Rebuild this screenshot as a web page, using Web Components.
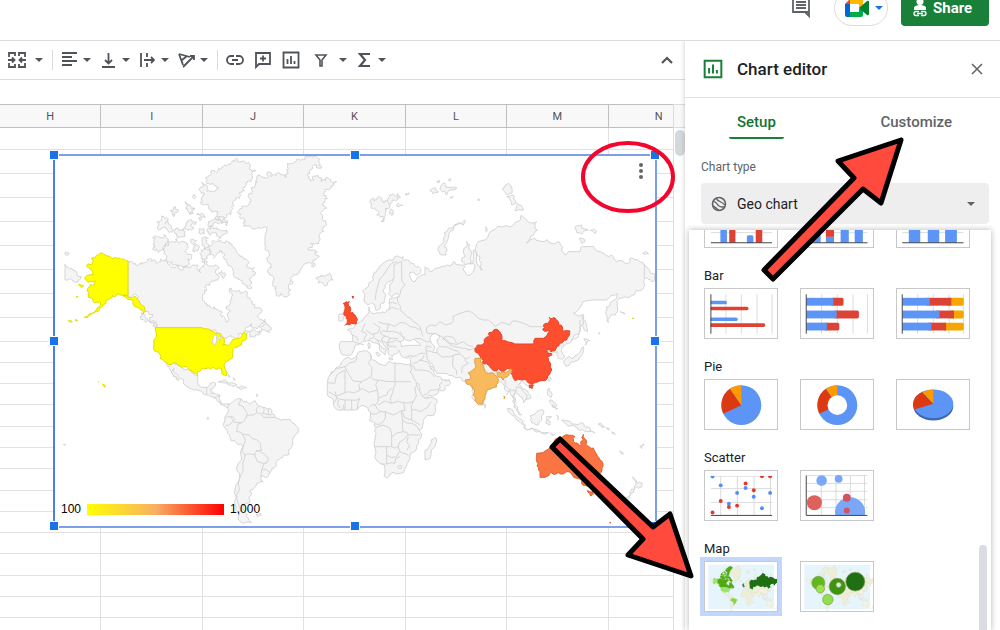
<!DOCTYPE html>
<html lang="en">
<head>
<meta charset="utf-8">
<title>Spreadsheet - Chart editor</title>
<style>
  html, body { height: 100%; }
  body {
    margin: 0;
    overflow: hidden;
    background: #fff;
    color: #202124;
    font-family: Roboto, "Liberation Sans", sans-serif;
  }
</style>
</head>
<body>
<sheets-app>
  <app-header slot="header"></app-header>
  <tool-bar slot="main"></tool-bar>
  <sheet-grid slot="main"><geo-chart min="100" max="1,000"></geo-chart></sheet-grid>
  <chart-editor slot="side" heading="Chart editor"></chart-editor>
</sheets-app>

<script>
(function () {
  'use strict';

  function define(name, render) {
    customElements.define(name, class extends HTMLElement {
      constructor() {
        super();
        this.attachShadow({ mode: 'open' });
      }
      connectedCallback() {
        this.shadowRoot.innerHTML = render(this);
      }
    });
  }

  /* ---------- icons ---------- */

  const ICONS = {
    merge: '<path d="M1 6V2h6v3M17 6V2h-6v3M1 12v4h6v-3M17 12v4h-6v-3M0 9h6M18 9h-6M4 6.500L6.500 9 4 11.500M14 6.500L11.500 9l2.500 2.500"/>',
    align: '<path d="M1 2h15M1 6h10M1 10h15M1 14h10"/>',
    bottom: '<path d="M2 16h13M8.500 2v10M5 9l3.500 3.500L12 9"/>',
    overflow: '<path d="M2 2v14M8 2v4M8 12v4M5 9h10M12 6l3 3-3 3"/>',
    rotate: '<path d="M1 3l11 3M1 3l4 11M4 9l5-4M5 16L16 5M12 5h4v4"/>',
    link: '<path d="M8 5H5a4 4 0 0 0 0 8h3M10 5h3a4 4 0 0 1 0 8h-3M6 9h6"/>',
    comment: '<path d="M2 2h14v11H5l-3 3zM9 4.500v6M6 7.500h6"/>',
    chart: '<path d="M1.500 1.500h15v15h-15zM5.500 8v5M9 5v8M12.500 10v3"/>',
    filter: '<path d="M4 4h10l-4 5v6H8V9z" stroke-width="1.600"/>',
    sigma: '<path d="M14 3H4l5 6-5 6h10" stroke-width="2.200"/>',
    up: '<path d="M4 12l5-5 5 5" stroke-width="2.200"/>',
    close: '<path d="M4 4l10 10M14 4L4 14" stroke-width="1.500"/>',
    geo: '<circle cx="9" cy="9" r="7.300"/><path d="M2.500 6c4 0 4 4 7 5.500s4 1 6 .5M6 2.500c1 4 6 3 9.500 7.500M2 11c3 1 4 3 7 5" stroke-width="1.500"/>',
    notes: '<path d="M1 0h16v13H1zM13 13l4 4v-4M4 3h10M4 6h10M4 9h10"/>',
    people: '<g fill="currentColor" stroke="none"><circle cx="9" cy="2.500" r="3.500"/><path d="M3 11V9c0-2 3-3 6-3s6 1 6 3v2z"/></g><path d="M8 12.500H5a2 2 0 0 0 0 4h3M10 12.500h3a2 2 0 0 1 0 4h-3M6 14.500h6" stroke-width="1.300"/>',
    meet: '<g stroke="none"><path fill="#ea4335" d="M0 5l5-5v5z"/><path fill="#ffba00" d="M5 0h11a2 2 0 0 1 2 2v7l-4 2V5H5z"/><path fill="#0066da" d="M0 5h5v13H2a2 2 0 0 1-2-2z"/><path fill="#00ac47" d="M5 13h9v-3l4-1v7a2 2 0 0 1-2 2H5z"/><path fill="#00832d" d="M14 9l8-7c1-.600 2 0 2 1v12c0 1-1 1.500-2 1z"/></g>'
  };

  define('ui-icon', el => {
    const name = el.getAttribute('name');
    const box = name === 'meet' ? '0 0 24 18' : '0 0 18 18';
    return `
      <style>
        :host { display: inline-block; width: 18px; height: 18px; flex: none; }
        :host([name="meet"]) { width: 24px; }
        svg { display: block; width: 100%; height: 100%; overflow: visible; }
      </style>
      <svg viewBox="${box}" fill="none" stroke="currentColor" stroke-width="1.800" aria-hidden="true">${ICONS[name]}</svg>`;
  });

  define('ui-caret', () => `
    <style>
      :host { display: inline-block; width: 8px; height: 4px; flex: none; }
      svg { display: block; width: 100%; height: 100%; }
    </style>
    <svg viewBox="0 0 8 4" fill="currentColor" aria-hidden="true"><path d="M0 0h8L4 4z"/></svg>`);

  /* ---------- application frame ---------- */

  define('sheets-app', () => `
    <style>
      :host { display: flex; flex-direction: column; height: 100vh; position: relative; overflow: hidden; }
      .body { display: flex; flex: 1; min-height: 0; }
      main { display: flex; flex-direction: column; flex: 1; min-width: 0; }
      aside {
        display: flex;
        flex: none;
        width: 315px;
        position: relative;
        background: #fff;
        box-shadow: -1px 0 4px rgba(60, 64, 67, .2);
        clip-path: inset(0 0 0 -8px);
      }
      ::slotted(sheet-grid) { flex: 1; min-height: 0; }
      ::slotted(chart-editor) { flex: 1; }
    </style>
    <slot name="header"></slot>
    <div class="body">
      <main><slot name="main"></slot></main>
      <aside><slot name="side"></slot></aside>
    </div>
    <callout-marks></callout-marks>`);

  define('app-header', () => `
    <style>
      :host {
        display: flex;
        align-items: center;
        justify-content: flex-end;
        gap: 13px;
        flex: none;
        box-sizing: border-box;
        height: 65px;
        margin-top: -24px;
        padding-right: 11px;
        border-bottom: 1px solid #dadce0;
        color: #5f6368;
      }
      button { display: flex; align-items: center; border: 0; background: none; padding: 0; color: inherit; font: inherit; }
      .notes { margin-right: 10px; }
      .notes ui-icon { width: 20px; height: 18px; }
      .meet { box-sizing: border-box; width: 54px; height: 36px; padding: 0 6px 0 10px; gap: 6px; border: 1px solid #dadce0; border-radius: 18px; color: #1a73e8; }
      .share { height: 36px; width: 88px; padding-left: 10px; gap: 4px; border-radius: 4px; background: #188038; color: #fff; font-size: 15px; font-weight: 700; }
    </style>
    <button class="notes" aria-label="Comments"><ui-icon name="notes"></ui-icon></button>
    <button class="meet" aria-label="Join a call"><ui-icon name="meet"></ui-icon><ui-caret></ui-caret></button>
    <button class="share"><ui-icon name="people"></ui-icon>Share</button>`);

  define('tool-bar', () => {
    const tool = (icon, label, cls) => `
      <button class="${cls}" aria-label="${label}"><ui-icon name="${icon}"></ui-icon>${/menu/.test(cls) ? '<ui-caret></ui-caret>' : ''}</button>`;
    return `
      <style>
        :host {
          display: flex;
          align-items: center;
          gap: 9px;
          flex: none;
          height: 38px;
          padding: 0 9px 0 8px;
          border-bottom: 1px solid #dadce0;
          color: #50545a;
        }
        button { display: flex; align-items: center; gap: 4px; margin: 0; border: 0; background: none; padding: 0; color: inherit; }
        .wide { gap: 9px; }
        .single { padding-right: 1px; }
        .filter { padding-left: 2px; }
        .end { margin-left: auto; }
        i { width: 1px; height: 20px; margin-right: -1px; background: #dadce0; }
      </style>
      ${tool('merge', 'Merge cells', 'menu wide')}
      <i></i>
      ${tool('align', 'Horizontal align', 'menu')}
      ${tool('bottom', 'Vertical align', 'menu')}
      ${tool('overflow', 'Text wrapping', 'menu')}
      ${tool('rotate', 'Text rotation', 'menu')}
      <i></i>
      ${tool('link', 'Insert link', 'single')}
      ${tool('comment', 'Insert comment', 'single')}
      ${tool('chart', 'Insert chart', 'single')}
      ${tool('filter', 'Filter', 'menu wide filter')}
      ${tool('sigma', 'Functions', 'menu')}
      ${tool('up', 'Hide the menus', 'end')}`;
  });

  /* ---------- grid ---------- */

  const COLUMNS = ['H', 'I', 'J', 'K', 'L', 'M', 'N'];
  const ROWS = [22, 24, 24, 24, 24, 24, 24, 24, 24, 21, 21, 21, 22, 21, 21, 22, 21, 21, 21, 22, 21, 21, 21];

  define('sheet-grid', () => `
    <style>
      :host { display: flex; flex-direction: column; position: relative; overflow: hidden; }
      .formula { flex: none; height: 24px; }
      .area { display: flex; flex: 1; min-height: 0; }
      .cells { flex: 1; min-width: 0; overflow: hidden; border-right: 1px solid #dadce0; }
      table { border-collapse: separate; border-spacing: 0; table-layout: fixed; width: 710px; }
      th {
        box-sizing: border-box;
        height: 24px;
        padding: 0;
        background: #f8f8f8;
        border: solid #c0c0c0;
        border-width: 1px 1px 1px 0;
        color: #50545a;
        font-size: 11px;
        font-weight: 400;
      }
      td { box-sizing: border-box; padding: 0; border: solid #e1e1e1; border-width: 0 1px 1px 0; }
      .scroll { flex: none; width: 11px; }
      .corner { height: 22px; background: #f8f8f8; border: solid #dadce0; border-width: 1px 0; }
      .thumb { height: 26px; margin: 2px 0 0 1px; border-radius: 5px; background: #d5d8db; }
    </style>
    <div class="formula"></div>
    <div class="area">
      <div class="cells">
        <table>
          <thead><tr>${COLUMNS.map(c => `<th scope="col">${c}</th>`).join('')}</tr></thead>
          <tbody>${ROWS.map(h => `<tr style="height:${h}px">${COLUMNS.map(() => '<td></td>').join('')}</tr>`).join('')}</tbody>
        </table>
      </div>
      <div class="scroll"><div class="corner"></div><div class="thumb"></div></div>
    </div>
    <slot></slot>`);

  /* ---------- world map ---------- */

  // Outlines are flat lists "x y x y ...", one shape per "|", each set with its own origin.
  const LAND = [
    { id: 'ca', rough: 3, at: [150, 450], d: '234 333 262 346 275 336 292 328 300 325 315 330 325 337 345 328 352 340 370 352 395 360 415 355 430 345 440 355 452 368 460 352 455 335 462 328 472 335 480 350 495 345 508 352 500 372 502 392 480 405 462 422 457 440 465 460 480 472 500 478 517 486 515 500 527 515 535 512 532 495 542 482 540 455 545 440 537 425 545 415 560 425 575 430 590 425 602 450 615 475 635 485 645 515 630 530 605 520 585 540 600 545 590 552 570 550 550 562 535 560 505 556 490 540 455 533 325 533 305 515 288 485 262 446 234 437|600 545 612 538 620 545 640 528 645 508 655 530 658 548 625 556 600 562|545 38 575 35 600 45 618 62 608 85 585 108 568 128 552 152 545 180 530 200 515 222 495 205 505 190 485 180 470 165 455 150 448 120 455 98 470 105 490 125 505 112 475 100 472 82 500 68 520 50|475 215 495 207 533 212 530 228 480 230|470 240 500 232 530 240 520 255 480 256|345 285 365 275 380 265 400 275 415 290 425 320 418 340 400 350 380 345 350 330 342 310|315 258 330 262 352 265 355 275 340 290 325 308 308 298 312 275|322 235 335 205 350 203 345 220 360 225 370 240 400 235 405 245 380 255 355 245|362 180 378 170 385 180 370 200|405 155 420 165 435 175 430 190 412 182|408 225 425 210 440 215 432 235 415 240|420 275 440 270 445 300 430 305|455 270 475 265 474 292 460 298|440 195 455 190 466 202 450 212|448 235 462 236 462 252 448 250|452 300 466 296 472 326 456 330|430 134 437 140 434 146|480 300 485 275 505 268 525 280 545 282 555 295 570 320 590 345 615 375 600 390 605 415 585 405 565 390 550 370 545 350 530 335 520 310 500 312 490 325|505 370 515 362 528 372 520 385|275 488 285 500 290 515 280 508|298 512 315 522 322 534 308 528' },
    { id: 'chukotka', at: [150, 450], d: '45 343 66 355 75 362 95 380 85 390 75 398 62 386 45 390|46 306 57 310 49 316' },
    { id: 'gl', rough: 3, at: [690, 450], d: '170 60 190 40 225 20 240 20 270 40 268 55 240 70 235 85 262 75 275 95 295 85 320 95 300 115 280 130 278 160 290 175 275 185 278 210 288 220 282 245 268 255 265 275 240 280 235 300 255 300 268 320 245 350 215 355 200 375 180 385 175 410 162 440 135 420 128 400 130 380 118 370 125 345 108 325 118 310 105 290 105 260 92 235 60 228 40 228 35 205 25 190 35 170 60 160 55 140 75 105 80 85 115 65 125 80 150 70 165 82|258 385 270 378 290 375 305 378 310 390 285 408 265 400|428 145 445 140 460 158 475 155 480 135 505 130 500 150 475 160 478 175 465 190 455 215 440 195 430 175|480 180 490 185 486 197 478 189|525 133 537 129 530 136|500 168 518 165 508 170|325 510 328 492 342 488 345 500 338 512' },
    { id: 'mx', at: [150, 990], d: '350 98 380 103 415 118 430 130 443 137 443 155 455 172 472 172 480 160 495 158 490 172 480 178 490 190 510 195 512 215 525 222 540 222 538 232 515 225 500 210 480 198 460 192 430 180 408 168 400 150 385 140 372 115 368 120 378 140 386 152 370 140 360 120 350 105|505 155 520 150 545 158 560 168 545 167 530 158|560 172 575 168 590 174 570 177|535 132 540 138 538 142|550 142 556 150 552 150|472 262 477 265 473 268|620 192 624 196 620 200|40 343 47 343 42 346' },
    { id: 'sa', at: [150, 990], d: '540 222 555 210 572 206 580 215 615 212 640 232 660 235 675 262 700 268 735 282 746 295 740 310 728 325 725 350 715 375 690 385 680 395 678 408 660 428 645 442 632 440 640 455 618 468 600 480 605 492 598 500 600 510 590 520 580 540 590 560 605 578 580 580 565 560 558 530 562 500 555 480 568 430 575 390 577 352 560 340 540 315 522 290 525 265 535 245|618 552 632 550 634 556 622 560' },
    { id: 'eurasia', at: [1290, 450], d: '-200 450 -202 425 -185 410 -170 390 -160 365 -145 345 -125 330 -100 318 -80 320 -78 332 -50 340 -30 355 -28 368 -45 372 -60 368 -62 378 -48 395 -40 385 -30 378 -15 375 -15 350 0 365 30 352 60 348 70 335 90 345 105 350 108 372 120 375 130 340 105 345 95 335 100 300 110 275 120 285 125 310 120 340 130 330 130 300 140 310 150 350 155 362 150 320 138 290 165 270 190 240 220 230 250 225 262 215 275 195 290 210 320 215 322 240 310 255 290 280 315 265 335 275 365 280 385 275 398 290 405 315 415 305 450 305 455 290 480 290 510 305 545 315 560 335 595 340 600 325 630 335 645 345 660 362 674 372 674 392 655 388 643 382 640 395 638 418 620 420 600 440 575 445 560 455 562 470 555 495 535 518 527 490 530 470 545 455 560 430 545 435 530 450 490 450 455 465 430 490 455 495 460 520 450 545 425 570 410 580 395 592 400 615 398 628 385 625 382 605 365 610 348 602 366 612 352 620 362 645 365 660 352 685 320 698 305 705 275 692 265 705 275 715 295 730 302 745 280 758 270 740 255 730 248 738 255 765 275 795 262 785 248 755 240 725 225 720 218 700 205 685 202 695 185 715 168 732 160 765 145 765 130 730 125 705 105 695 90 682 70 678 45 670 20 670 8 652 0 650 15 675 35 690 58 690 62 700 45 720 15 735 -15 745 -30 715 -45 695 -58 675 -58 640 -52 618 -90 612 -95 600 -105 612 -112 620 -125 600 -135 588 -150 572 -165 565 -152 585 -130 600 -135 615 -152 595 -175 575 -190 572 -205 578 -220 585 -230 600 -245 615 -265 613 -270 600 -268 575 -232 575 -232 555 -248 540 -230 535 -215 520 -200 508 -190 495 -185 470 -178 485 -165 490 -135 488 -120 475 -122 447 -90 440 -95 432 -115 440 -125 430 -120 402 -108 385 -130 400 -140 425 -135 445 -150 465 -162 482 -175 458 -190 462|105 210 100 225 70 240 55 265 42 290 48 315 35 315 25 295 40 265 55 235 80 222|235 100 245 130 230 135 218 115|230 140 250 135 258 155 245 165|262 160 280 180 255 182|435 235 455 225 475 240 455 252|480 242 500 245 495 250|448 265 465 275 455 280|0 120 15 112 25 125 10 132|30 115 45 100 48 112 80 112 60 120 50 135 38 125|20 95 30 92 28 98|55 90 62 84 60 94|142 148 150 150 145 152|168 230 173 240 168 245|638 310 655 312 645 305|60 142 70 140 64 145' },
    { id: 'asia', at: [1380, 870], d: '142 355 165 375 190 400 195 412 170 390|190 412 225 418 265 428 230 426 200 420|210 378 235 360 250 362 245 385 235 405 215 398|260 380 275 380 262 390 270 405 258 400|268 295 275 310 270 322 262 310|270 330 290 345 285 353 273 341|278 345 293 355 288 358|372 145 390 152 375 165|370 170 368 190 355 210 335 215 318 228 310 215 335 205 355 190|368 72 378 100 382 125 372 120 370 95|265 265 270 260 268 275|70 340 78 345 74 355|305 390 330 395 345 402 365 398 385 410 405 430 380 425 355 420 330 408|415 402 435 410 425 412|440 412 448 420|455 425 466 434|478 484 490 492|540 470 552 462 546 475|270 428 285 432 275 434|290 375 296 385 292 390|480 65 495 72|415 132 420 128' },
    { id: 'nz', at: [1560, 1200], d: '337 230 350 248 368 250 355 265 342 262 348 252|345 265 330 285 320 300 312 300 330 275' },
    { id: 'af', at: [960, 960], d: '75 115 110 108 150 100 158 120 190 135 205 125 225 128 250 132 272 135 270 155 290 195 315 235 350 238 345 255 310 300 298 330 302 355 290 375 272 400 262 430 240 460 205 472 192 468 180 430 165 385 168 340 165 310 148 300 150 275 140 262 100 270 65 270 40 250 22 225 22 200 30 165 55 140|345 352 348 370 330 415 315 418 315 390 330 375|146 68 150 72 150 84 145 86|168 98 182 104 174 108|205 115 220 118|258 112 268 110 262 116' }
  ];

  const WATER = [
    { at: [960, 960], d: '335 45 345 40 360 50 350 60 358 80 352 100 338 98 345 80 330 60|240 65 252 50 265 62 278 58 290 65 302 76 270 76 245 80' },
    { at: [150, 990], d: '490 22 500 15 495 48|503 24 512 18 508 36' }
  ];

  const BORDERS = [
    { at: [150, 990], d: '572 206 565 225 585 240 588 262 575 278 562 290 560 305 578 312 580 350|525 265 540 260 555 268 535 286 527 286|540 258 575 278|588 262 600 255 620 248 625 230|640 232 638 250 665 255|655 235 655 253|620 248 640 262 675 262|578 312 598 315 605 325 632 340 635 360 618 365 615 375 590 372 585 375 580 350|618 362 632 365 650 378 655 392 640 400 615 375|655 392 635 420 632 440|635 418 660 428|585 375 578 400 570 440 568 480 565 520 572 545|470 172 470 192|480 190 490 190|490 205 510 195' },
    { at: [1290, 450], d: '0 525 30 515 65 520 68 500 105 485 130 490 145 505 175 510 195 530 240 525 255 512 280 520 300 530 335 530 350 520|0 550 35 560 60 580 100 575 130 590|0 525 -12 540 0 552|-165 450 -155 400 -140 375 -120 345 -100 335|-108 385 -108 345 -85 335 -85 380 -75 405 -90 435|-98 440 -95 460 -90 480 -70 500 -50 515 -30 530 -25 545 -20 560|643 345 643 382|-125 460 -100 462|-125 475 -95 478|425 570 450 540 450 510' },
    { at: [960, 960], d: '100 65 132 75|98 45 115 62|135 10 125 35 140 45 132 62|138 30 175 38 180 22 160 10|175 5 205 12 200 35 180 38|205 12 240 8 270 20 300 30|200 35 235 38 250 52|180 38 195 48 210 55 235 55|195 48 185 62 215 65|210 55 208 80 230 82|215 68 240 65|160 40 158 55 145 60|200 70 205 90|240 35 245 50|285 55 318 65|318 78 335 82|318 65 335 62|318 90 335 95|318 78 320 100 335 130 342 145|278 110 300 100 318 100|278 130 300 120 335 150|300 120 312 105|272 135 285 150 305 150 345 172|310 225 330 210 360 205 368 185|388 180 370 178|352 100 385 110 400 105 435 115 450 110|400 105 398 140 410 165|435 115 445 130 425 160|360 80 400 90 420 100|370 55 400 80 430 85 450 90|368 60 380 48 410 70|440 90 465 85|555 178 570 210 590 215|590 200 580 230 590 250|590 200 610 215 620 240|570 210 560 225|490 145 530 160 528 152' },
    { at: [960, 960], d: '110 108 105 125 75 140 30 165|75 140 85 160 125 185 152 170|150 100 145 130 155 160 152 170 175 180 222 185|225 128 225 185 272 185|225 185 222 200 210 240 215 250 250 248 280 245|280 245 285 210 290 195|22 188 45 190 50 165|50 165 75 150 75 218 25 215|125 185 120 210 85 215 75 218|175 180 172 210 125 205 120 210|172 210 175 235 165 255 148 262|175 235 200 225 215 205|40 250 50 235 75 240 75 270|75 240 95 240 95 270|95 240 120 235 112 268|50 235 45 215|175 255 215 250|165 255 180 275 150 280|180 275 195 275 190 305 165 312|195 275 245 272 248 300 250 335 215 350 210 325 168 322|250 248 255 272 245 272|280 245 275 270 300 275 325 260 335 245|275 270 275 300 300 315|245 272 275 300|248 300 275 310 298 330|250 335 265 345 300 345|215 350 215 380 165 380|215 380 235 378 250 360 265 345|200 380 200 405 200 432 182 432|200 405 230 410 240 395 265 405|235 378 240 395|200 432 225 430 240 410|265 350 270 380 262 390|235 438 243 436 245 445 236 446 235 438|65 270 70 255|55 240 60 265' }
  ];

  const VALUES = [
    { id: 'us', fill: '#ffff00', line: '#dede00', at: [150, 450], d: '159 310 175 318 195 322 215 328 234 333 234 437 218 437 208 433 196 440 186 436 178 448 165 462 150 474 135 486 118 495 102 502 120 490 140 478 152 462 148 455 130 456 128 445 115 442 118 428 112 416 120 405 133 402 136 393 115 397 104 383 118 374 132 374 128 366 110 350 112 343 128 342 124 326 140 316|218 437 240 442 262 446 280 468 288 485 280 492 262 472 250 455|75 510 83 512|55 512 67 515|85 403 101 408 95 413|78 440 84 440 82 442|315 533 455 533 462 537 480 540 495 550 508 550 515 560 518 585 545 575 560 565 575 560 583 545 590 565 578 572 575 585 555 592 548 608 548 622 535 632 522 645 528 678 520 675 513 655 490 652 480 658 455 655 445 665 443 676 430 668 415 655 400 650 380 640 350 638 330 625 320 605 312 585|157 702 166 710 162 711|144 694 147 696|1747 504 1751 504 1750 507' },
    { id: 'gb', fill: '#fb4d2d', line: '#e8401f', at: [690, 450], d: '340 460 358 455 355 468 362 475 360 485 375 495 382 510 380 520 360 523 345 526 352 512 350 498 342 490 345 478|366 440 371 439 369 445' },
    { id: 'cn', fill: '#fd4f2f', line: '#ea4324', at: [1380, 870], d: '45 175 65 165 90 140 85 130 105 118 122 130 125 152 165 162 220 162 225 145 250 145 270 125 248 118 262 100 268 82 285 84 295 105 310 125 330 123 325 140 310 155 290 170 272 185 270 174 256 182 276 192 262 200 272 225 275 240 262 265 230 277 213 282 175 268 165 272 155 240 130 245 100 242 70 222 62 205 45 185|208 285 220 285 216 296 208 293' },
    { id: 'in', fill: '#f8ba5c', line: '#dda045', at: [1380, 870], d: '45 205 65 205 68 225 72 235 105 255 112 262 115 278 95 295 78 308 68 342 56 344 40 315 35 288 20 282 15 270 32 265 25 248 48 230|112 248 130 246 150 236 155 248 135 262 130 270 118 262|131 318 134 320 132 327' },
    { id: 'au', fill: '#fb7544', line: '#e06230', at: [1560, 1200], d: '50 160 85 148 95 138 130 108 165 110 160 125 180 138 188 122 190 103 198 120 208 140 225 155 240 180 246 205 240 230 225 255 200 258 185 245 170 235 140 215 115 218 75 232 60 232 55 210 50 185|202 272 218 274 212 288|269 367 272 367 271 370' }
  ];

  // Rough silhouettes of Russia and Brazil, used by the small preview only.
  const PREVIEW = [
    { id: 'ru', at: [1290, 450], d: '-30 355 0 365 60 348 105 350 100 300 120 285 165 270 220 230 275 195 320 215 310 255 385 275 405 315 480 290 560 335 630 335 674 380 600 440 555 495 530 450 430 490 455 530 400 570 350 520 255 512 195 530 105 485 65 520 0 525 -10 590 -80 560 -90 440' },
    { id: 'br', at: [150, 990], d: '588 262 640 262 675 262 735 282 740 310 715 375 680 395 660 428 635 418 655 392 635 360 605 325 562 305' }
  ];

  function jitter(x, y) {
    const v = Math.sin(x * 12.9898 + y * 78.233) * 43758.5453;
    return v - Math.floor(v) - 0.5;
  }

  // Breaks long coast segments up; exact horizontals and verticals stay straight.
  function roughen(points, depth, amount) {
    if (!depth) return points;
    const out = [points[0]];
    for (let i = 1; i < points.length; i++) {
      const [x0, y0] = points[i - 1];
      const [x1, y1] = points[i];
      const dx = x1 - x0, dy = y1 - y0;
      if (dx !== 0 && dy !== 0 && Math.hypot(dx, dy) > 6) {
        const k = jitter(x0 + x1, y0 + y1) * amount;
        out.push([(x0 + x1) / 2 - dy * k, (y0 + y1) / 2 + dx * k]);
      }
      out.push(points[i]);
    }
    return roughen(out, depth - 1, amount);
  }

  function toPath(set, closed, depth) {
    const amount = set.rough ? 0.95 : 0.55;
    return set.d.split('|').map(shape => {
      const n = shape.split(' ').map(Number);
      const pts = [];
      for (let i = 0; i < n.length; i += 2) pts.push([n[i] + set.at[0], n[i + 1] + set.at[1]]);
      if (closed) pts.push(pts[0]);
      return 'M' + roughen(pts, depth, amount).map(p => p.map(Math.round).join(' ')).join('L') + (closed ? 'z' : '');
    }).join('');
  }

  function worldShapes() {
    return `
      <g fill="#f4f4f4" stroke="#d5d5d5" stroke-width="3" stroke-linejoin="round">
        ${LAND.map(s => `<path d="${toPath(s, true, s.rough || 2)}"/>`).join('')}
        <g fill="none">${BORDERS.map(s => `<path d="${toPath(s, false, 1)}"/>`).join('')}</g>
      </g>
      ${VALUES.map(s => `<path d="${toPath(s, true, 2)}" fill="${s.fill}" stroke="${s.line}" stroke-width="3" stroke-linejoin="round"/>`).join('')}
      <g fill="#fff" stroke="#d5d5d5" stroke-width="3">${WATER.map(s => `<path d="${toPath(s, true, 1)}"/>`).join('')}</g>`;
  }

  define('geo-chart', el => `
    <style>
      :host {
        display: block;
        position: absolute;
        left: 53px;
        top: 74px;
        width: 604px;
        height: 374px;
        box-sizing: border-box;
        border: 2px solid #7c9fe9;
        border-left-color: #4a80e4;
        background: #fff;
        font-family: "Liberation Sans", Arial, sans-serif;
      }
      .world { position: absolute; left: 0; top: 0; width: 100%; height: 100%; }
      .legend { position: absolute; left: 6px; bottom: 10px; display: flex; align-items: center; gap: 6px; font-size: 12px; line-height: 14px; color: #000; }
      .scale { width: 137px; height: 11px; background: linear-gradient(90deg, #ff0, #f8b062 50%, #f00); }
      .more { position: absolute; right: 8px; top: 5px; width: 12px; height: 20px; padding: 0; border: 0; background: none; }
      .more svg { display: block; }
      .handle { position: absolute; width: 8px; height: 8px; margin: -5px; background: #1a73e8; outline: 1px solid #fff; }
      .l { left: 0; } .c { left: 50%; } .r { left: 100%; }
      .t { top: 0; } .m { top: 50%; } .b { top: 100%; }
      .m, .b { margin-top: -4px; }
      .c, .r { margin-left: -4px; }
    </style>
    <svg class="world" viewBox="165 468 1800 1110" role="img" aria-label="World map">${worldShapes()}</svg>
    <div class="legend"><span>${el.getAttribute('min')}</span><div class="scale"></div><span>${el.getAttribute('max')}</span></div>
    <button class="more" aria-label="Chart options">
      <svg width="12" height="20" fill="#666"><circle cx="6" cy="4" r="2"/><circle cx="6" cy="10" r="2"/><circle cx="6" cy="16" r="2"/></svg>
    </button>
    ${['l t', 'c t', 'r t', 'l m', 'r m', 'l b', 'c b', 'r b'].map(p => `<div class="handle ${p}"></div>`).join('')}`);

  /* ---------- chart previews ---------- */

  const BLUE = '#5c95f5', RED = '#dc4335', AMBER = '#f5a700';

  const rect = (x, y, w, h, fill) => `<rect x="${x}" y="${y}" width="${w}" height="${h}" fill="${fill}"/>`;
  const rounded = (x, y, w, h, fill) => `<rect x="${x}" y="${y}" width="${w}" height="${h}" rx="5" fill="${fill}"/>`;
  const dots = (list, r, fill) => list.map(p => `<circle cx="${p[0]}" cy="${p[1]}" r="${r}" fill="${fill}"/>`).join('');
  const lines = d => `<path d="${d}" stroke="#d4d4d4" stroke-width="2.500" fill="none"/>`;
  const axis = d => `<path d="${d}" stroke="#444" stroke-width="3" fill="none"/>`;

  function previewMap(colored) {
    const pick = { ca: '#4faa10', ru: '#1f7012', br: '#86d644' };
    const fill = s => (colored && pick[s.id]) || '#eeedd8';
    const us = VALUES[0];
    return `
      ${rect(10, 8, 201, 136, '#e6f5fb')}
      <svg x="10" y="8" width="201" height="136" viewBox="150 440 1840 1180" preserveAspectRatio="none">
        <g stroke="#dcdcc4" stroke-width="5">
          ${LAND.map(s => `<path d="${toPath(s, true, 0)}" fill="${fill(s)}" ${colored && s.id === 'ca' ? 'stroke="#4faa10" stroke-width="14"' : ''}/>`).join('')}
          ${VALUES.slice(1).map(s => `<path d="${toPath(s, true, 0)}" fill="#f4f2df"/>`).join('')}
        </g>
        <path d="${toPath(us, true, 0)}" fill="${colored ? '#a0e070' : '#eeedd8'}"/>
        ${colored ? PREVIEW.map(s => `<path d="${toPath(s, true, 1)}" fill="${pick[s.id]}"/>`).join('') : ''}
        ${colored ? `<path d="${toPath(VALUES[1], true, 0)}" fill="#1f7012" stroke="#1f7012" stroke-width="16"/>` : ''}
      </svg>`;
  }

  const THUMBS = {
    column: () => lines('M18 106h187') + rect(47, 10, 20, 127, BLUE) + rect(74, 10, 19, 127, RED) +
      rounded(128, 114, 20, 28, BLUE) + rect(155, 20, 20, 117, RED) + rect(120, 138, 40, 8, '#fff') + axis('M18 137h187'),
    stackedColumn: () => lines('M16 106h187') + rect(36, 50, 24, 87, BLUE) + rect(76, 40, 25, 79, RED) + rect(76, 119, 25, 18, BLUE) +
      rect(121, 60, 25, 77, BLUE) + rect(164, 60, 25, 77, BLUE) + axis('M16 137h187'),
    fullColumn: () => lines('M16 106h187') + rect(36, 20, 35, 117, BLUE) + rect(94, 20, 35, 117, BLUE) + rect(147, 20, 36, 117, BLUE) + axis('M16 137h187'),
    bar: () => lines('M64 16v121M111 16v121M159 16v121M205 16v121') + rounded(14, 36, 53, 11, BLUE) + rounded(14, 54, 119, 11, RED) +
      rounded(14, 87, 86, 11, BLUE) + rounded(14, 105, 170, 11, RED) + rect(8, 20, 9, 110, '#fff') + axis('M18 16v121'),
    stackedBar: () => lines('M63 16v121M111 16v121M159 16v121M203 16v121') + rounded(90, 27, 40, 24, RED) + rounded(100, 66, 77, 24, RED) + rounded(70, 103, 47, 24, RED) +
      rect(16, 27, 83, 24, BLUE) + rect(16, 66, 93, 24, BLUE) + rect(16, 103, 63, 24, BLUE) + axis('M16 16v121'),
    fullBar: () => lines('M63 16v121M111 16v121M159 16v121M203 16v121') + rounded(150, 27, 54, 24, AMBER) + rounded(160, 66, 44, 24, AMBER) + rounded(140, 103, 64, 24, AMBER) +
      rect(90, 27, 76, 24, RED) + rect(120, 66, 54, 24, RED) + rect(96, 103, 54, 24, RED) +
      rect(16, 27, 84, 24, BLUE) + rect(16, 66, 114, 24, BLUE) + rect(16, 103, 89, 24, BLUE) + axis('M16 16v121'),
    pie: () => `<circle cx="111" cy="77" r="61" fill="${BLUE}"/><path d="M111 77L56 103A61 61 0 0 1 76 27z" fill="#dc3912"/><path d="M111 77L76 27A61 61 0 0 1 111 16z" fill="#ff9900"/>`,
    donut: () => THUMBS.pie() + '<circle cx="111" cy="77" r="30" fill="#fff"/>',
    pie3d: () => `<ellipse cx="111" cy="80" rx="61" ry="44" fill="#3c66b0"/><ellipse cx="111" cy="73" rx="61" ry="44" fill="${BLUE}"/><path d="M111 73L53 90A61 44 0 0 1 77 37z" fill="#dc3912"/><path d="M111 73L77 37A61 44 0 0 1 111 29z" fill="#ff9900"/>`,
    scatter: () => lines('M18 16h187M18 54h187M18 96h187M48 16v121M99 16v121M150 16v121M200 16v121') +
      dots([[23, 17], [48, 44], [73, 100], [98, 67], [124, 52], [149, 79], [174, 114], [199, 67]], 6, '#4f8ff5') +
      dots([[23, 127], [48, 92], [73, 110], [98, 106], [124, 38], [149, 59], [174, 16], [199, 16]], 6, '#e23a2c') +
      rect(15, 6, 195, 9, '#fff') + axis('M18 136h187'),
    bubble: () => lines('M16 14h187M16 38h187M16 62h187M16 88h187M16 112h187M62 14v122M107 14v122M151 14v122M194 14v122') +
      `<path d="M105 136A46 46 0 1 1 195 136z" fill="#7aa7f7"/>` + dots([[63, 29]], 16, '#7aa7f7') + dots([[115, 24]], 12, '#7aa7f7') +
      dots([[41, 97]], 23, '#de625b') + dots([[140, 82]], 12, '#d2535c') + dots([[140, 121]], 9, '#d2535c') + axis('M16 14v122h187'),
    geo: () => previewMap(true),
    geoMarkers: () => previewMap(false) + '<g stroke="#7c9a5a" stroke-width="2">' +
      dots([[53, 64]], 20, '#5fb81c') + dots([[59, 82]], 13, '#9be34b') + dots([[111, 75]], 25, '#3d9410') + dots([[115, 70]], 8, '#dff0d0') +
      dots([[166, 60]], 29, '#1f7012') + dots([[82, 115]], 16, '#8fe04a') + '</g>'
  };

  define('chart-thumb', el => `
    <style>
      :host { display: block; width: 74px; height: 51px; }
      button { display: block; box-sizing: border-box; width: 100%; height: 100%; padding: 0; border: 1px solid #c8c8c8; background: #fff; overflow: hidden; }
      svg { display: block; width: 100%; height: 100%; }
      :host([selected]) { outline: 4px solid #c3d6fb; }
    </style>
    <button aria-label="${el.getAttribute('kind')}" aria-pressed="${el.hasAttribute('selected')}">
      <svg viewBox="0 0 220 150" preserveAspectRatio="none">${THUMBS[el.getAttribute('kind')]()}</svg>
    </button>`);

  define('chart-group', () => `
    <style>
      :host { display: block; flex: none; }
      h3 { margin: 20px 0 4px; font-size: 13px; line-height: 16px; font-weight: 400; color: #202124; }
      :host([plain]) h3 { display: none; }
      .row { display: grid; grid-template-columns: repeat(3, 74px); column-gap: 22px; }
    </style>
    <h3><slot name="label"></slot></h3>
    <div class="row"><slot></slot></div>`);

  /* ---------- side panel ---------- */

  define('chart-editor', el => {
    const group = (label, kinds, selected) => `
      <chart-group ${label ? '' : 'plain'}>
        ${label ? `<span slot="label">${label}</span>` : ''}
        ${kinds.map(k => `<chart-thumb kind="${k}" ${k === selected ? 'selected' : ''}></chart-thumb>`).join('')}
      </chart-group>`;
    return `
      <style>
        :host { display: flex; flex-direction: column; position: relative; }
        header { display: flex; align-items: center; height: 56px; padding: 0 14px 0 18px; border-bottom: 1px solid #dfe1e4; }
        header ui-icon[name="chart"] { width: 20px; height: 20px; color: #188038; }
        h2 { flex: 1; margin: 0 0 0 14px; font-size: 17px; line-height: 24px; font-weight: 500; }
        button { border: 0; padding: 0; background: none; color: #5f6368; font: inherit; }
        .close { display: block; height: 18px; }
        nav { display: flex; justify-content: space-between; padding: 14px 48px 0 44px; }
        nav button { height: 27px; font-size: 15px; font-weight: 500; line-height: 20px; padding: 0 0 5px; border-bottom: 2px solid transparent; }
        nav .on { padding: 0 8px 5px; color: #137333; border-color: #188038; border-radius: 2px; }
        .field { padding: 20px 11px 0 16px; }
        label { display: block; font-size: 12px; line-height: 16px; color: #5f6368; }
        .pick { display: grid; align-items: center; margin-top: 8px; border-radius: 4px; background: #eee; color: #5f6368; }
        .pick > * { grid-area: 1 / 1; }
        .pick ui-icon { width: 16px; height: 16px; margin-left: 10px; }
        .pick ui-caret { justify-self: end; margin-right: 14px; }
        select { appearance: none; width: 100%; height: 41px; padding: 0 36px; border: 0; background: none; color: #202124; font: 14px Roboto, sans-serif; }
        .menu {
          position: absolute;
          left: 4px;
          right: 9px;
          top: 189px;
          bottom: 0;
          display: flex;
          background: #fff;
          box-shadow: 0 0 6px rgba(0, 0, 0, .3);
          clip-path: inset(-5px -8px 0 -8px);
        }
        .list { flex: 1; display: flex; flex-direction: column; justify-content: flex-end; overflow: hidden; padding: 0 0 18px 15px; }
        .bar { align-self: flex-end; width: 8px; height: 85px; margin-right: 4px; border-radius: 4px 4px 0 0; background: #dadce0; }
      </style>
      <header>
        <ui-icon name="chart"></ui-icon>
        <h2>${el.getAttribute('heading')}</h2>
        <button class="close" aria-label="Close"><ui-icon name="close"></ui-icon></button>
      </header>
      <nav><button class="on">Setup</button><button>Customize</button></nav>
      <div class="field">
        <label for="type">Chart type</label>
        <div class="pick">
          <ui-icon name="geo"></ui-icon>
          <select id="type"><option>Geo chart</option></select>
          <ui-caret></ui-caret>
        </div>
      </div>
      <div class="menu">
        <div class="list">
          ${group('', ['column', 'stackedColumn', 'fullColumn'])}
          ${group('Bar', ['bar', 'stackedBar', 'fullBar'])}
          ${group('Pie', ['pie', 'donut', 'pie3d'])}
          ${group('Scatter', ['scatter', 'bubble'])}
          ${group('Map', ['geo', 'geoMarkers'], 'geo')}
        </div>
        <div class="bar"></div>
      </div>`;
  });

  /* ---------- hand-drawn marks over the page ---------- */

  define('callout-marks', () => `
    <style>
      :host { display: block; position: absolute; left: 0; top: 0; pointer-events: none; }
      svg { display: block; }
    </style>
    <svg width="1000" height="630" viewBox="0 0 1000 630" aria-hidden="true">
      <ellipse cx="628" cy="177" rx="45" ry="34" fill="none" stroke="#f2062e" stroke-width="4"/>
      <g fill="#ff4a3d" stroke="#000" stroke-width="5" stroke-linejoin="round">
        <path d="M901 140L838 161L854 178L764 270L773 279L863 189L881 203z"/>
        <path d="M552 447L560 439L653 527L670 514L691 576L628 555L643 539z"/>
      </g>
    </svg>`);
})();
</script>
</body>
</html>
